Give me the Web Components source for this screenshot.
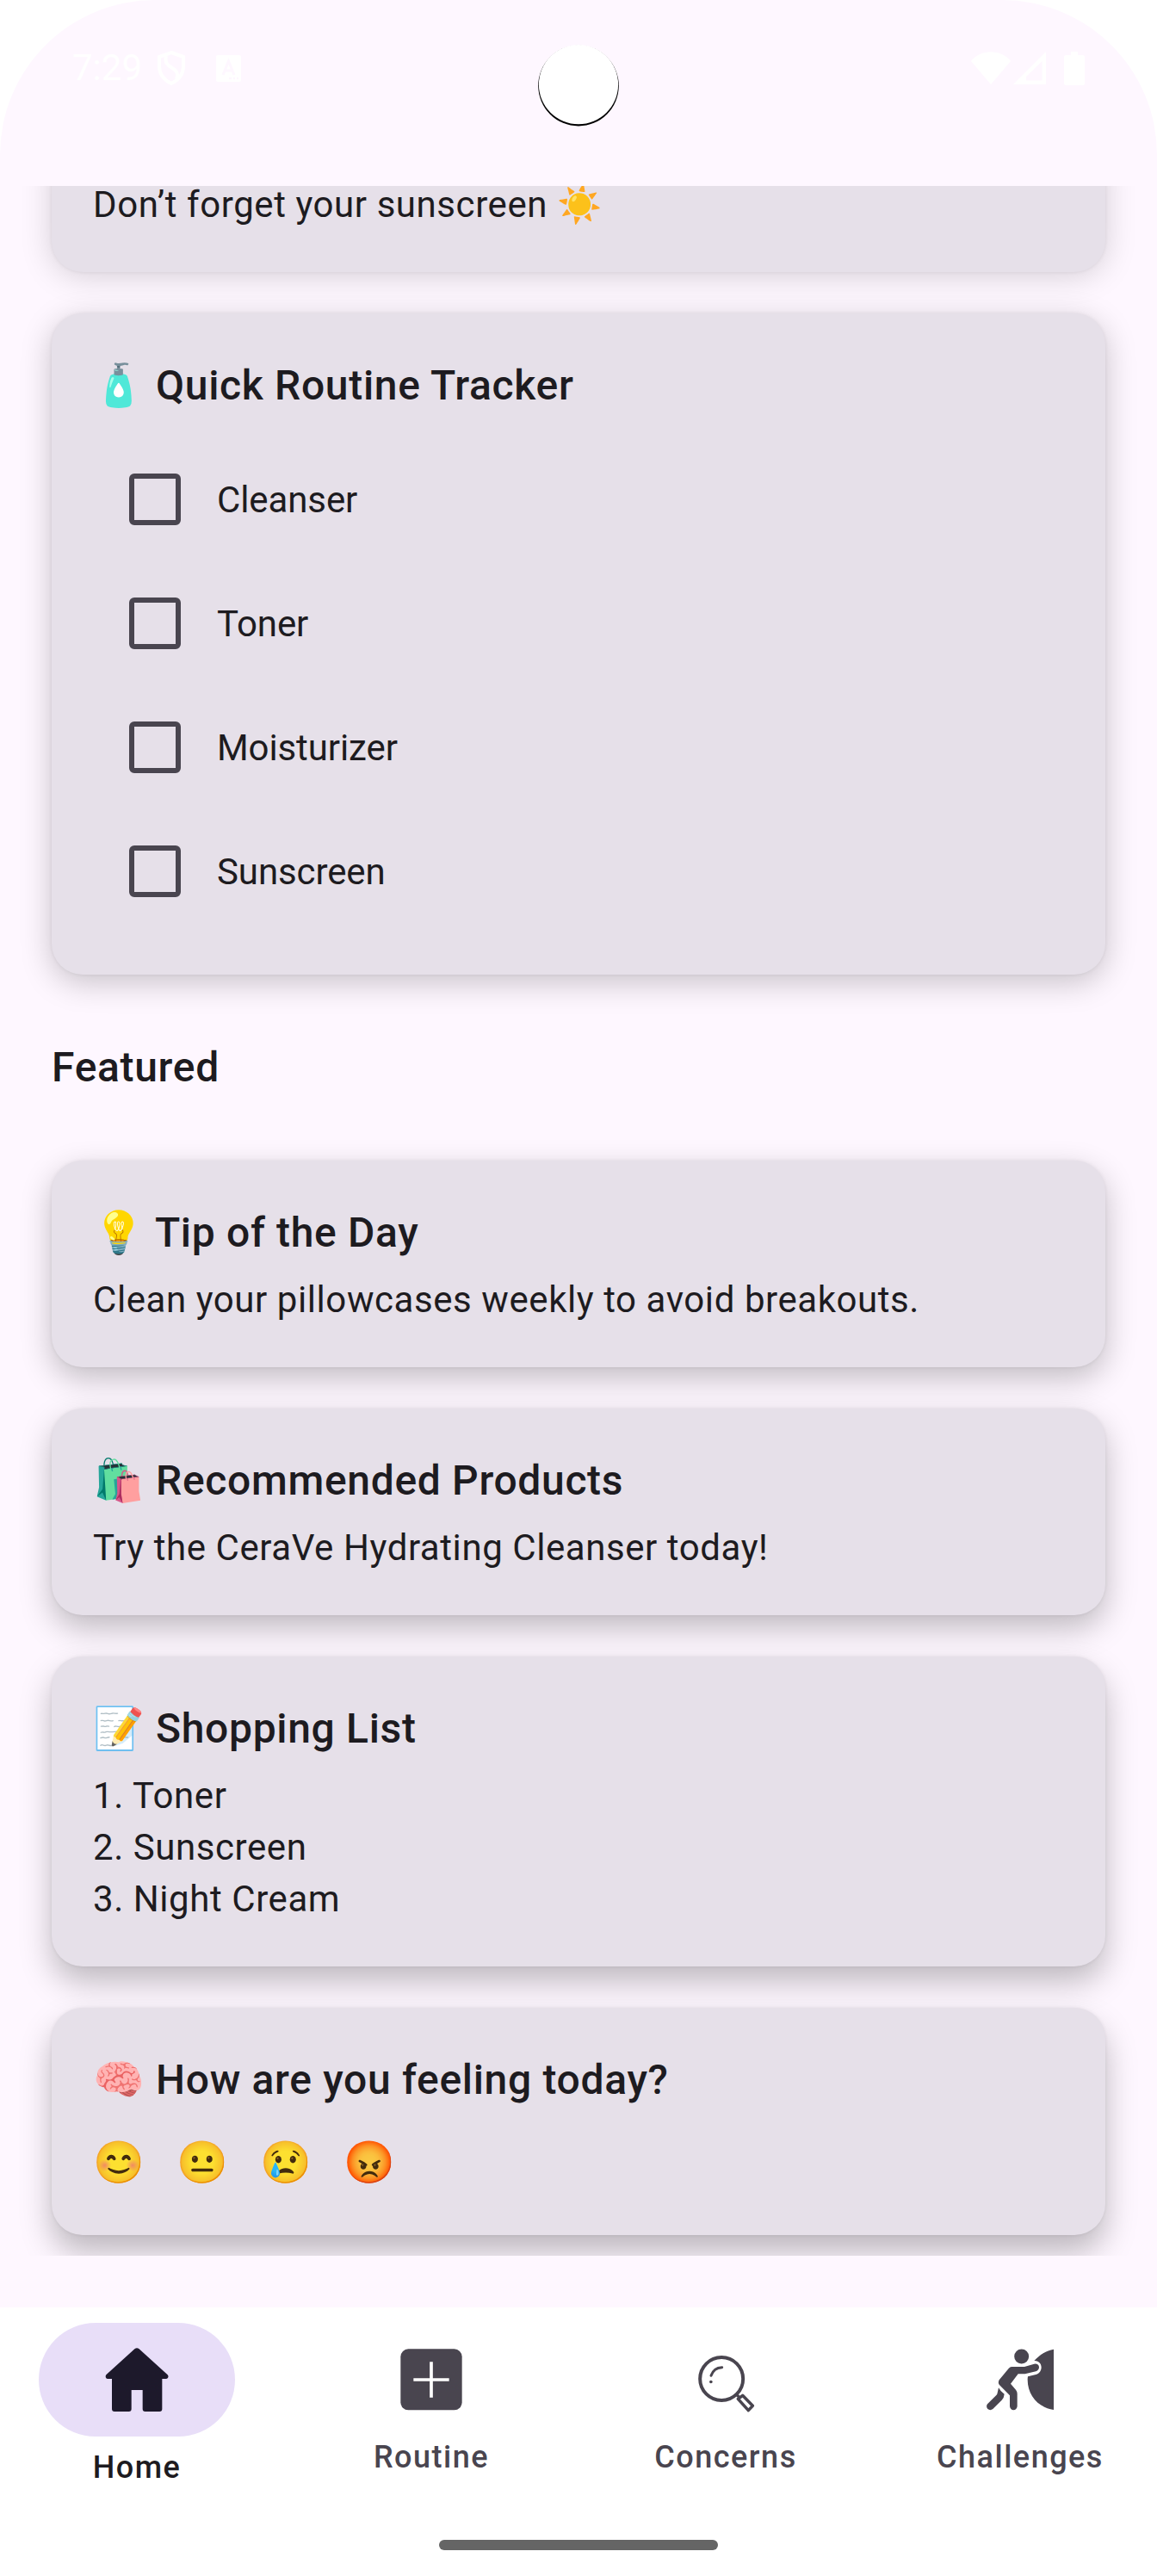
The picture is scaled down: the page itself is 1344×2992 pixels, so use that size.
<!DOCTYPE html>
<html lang="en">
<head>
<meta charset="utf-8">
<title>Skincare Home</title>
<style>
  html, body { margin: 0; padding: 0; background: #fff; }
  body { width: 1344px; height: 2992px; overflow: hidden; font-family: Roboto, "Noto Color Emoji", sans-serif; color: #1d1b20; }
</style>
</head>
<body>
<skin-app></skin-app>
<script>
const define = (name, html) => {
  const t = document.createElement('template');
  t.innerHTML = html;
  customElements.define(name, class extends HTMLElement {
    constructor() {
      super();
      this.attachShadow({ mode: 'open' }).appendChild(t.content.cloneNode(true));
    }
  });
};

define('status-bar', `
<style>
  :host { display: flex; height: 216px; box-sizing: border-box; padding: 54px 84px 0 84px; position: relative; color: #fff; justify-content: space-between; align-items: flex-start; }
  .side { display: flex; align-items: center; height: 50px; }
  .time { font-size: 42px; line-height: 50px; width: 98px; }
  svg { display: block; }
  .cam { position: absolute; left: 625px; top: 52px; }
</style>
<div class="side">
  <span class="time">7:29</span>
  <svg width="34" height="42" viewBox="0 0 34 42" fill="none" stroke="#fff" stroke-width="4"><path d="M17 3 31 8V19C31 28 25 35 17 39 9 35 3 28 3 19V8Z"/><path d="M11 7C9 15 13 18 18 21 25 25 25 29 23 34"/></svg>
  <svg width="29" height="31" viewBox="0 0 29 31" style="margin-left:35px"><rect width="29" height="31" rx="2" fill="#fff"/><path d="M8 23 14.500 7 21 23M10.500 18H18.500" fill="none" stroke="#fef7ff" stroke-width="3"/><path d="M15 27h3m2 0h2m2 0h2" stroke="#fef7ff" stroke-width="2.500"/></svg>
</div>
<div class="side">
  <svg width="46" height="38" viewBox="0 0 46 38"><path d="M0 11C11-3.500 35-3.500 46 11L23 38Z" fill="#fff"/></svg>
  <svg width="38" height="38" viewBox="0 0 38 38" style="margin-left:3px"><path fill-rule="evenodd" d="M38 0V38H0ZM33.500 11 15 29V33.500H33.500Z" fill="#fff"/></svg>
  <svg width="24" height="39" viewBox="0 0 24 39" style="margin-left:21px"><path d="M8 0h8v4h6q2 0 2 2v31q0 2-2 2H2q-2 0-2-2V6q0-2 2-2h6z" fill="#fff"/></svg>
</div>
<svg class="cam" width="94" height="96" viewBox="0 0 94 96"><circle cx="47" cy="47.600" r="46.800" fill="#000"/><circle cx="47" cy="46.200" r="46.100" fill="#fff"/></svg>
`);

define('app-card', `
<style>
  :host { display: flex; flex-direction: column; box-sizing: border-box; padding: 48px; border-radius: 36px; background: #e6e0e9; font-size: 42px; line-height: 60px; letter-spacing: .57px;
    box-shadow: 0 0 4px rgba(0,0,0,.07), 0 var(--drop, 8px) 36px rgba(0,0,0,var(--dark, .2)); }
  ::slotted([slot=title]) { display: block; height: 72px; font-size: 48px; line-height: 72px; font-weight: 500; letter-spacing: .67px; white-space: pre; margin: 0 0 var(--gap, 12px); }
</style>
<slot name="title"></slot><slot></slot>
`);

define('check-row', `
<style>
  :host { display: flex; align-items: center; height: 144px; letter-spacing: -.1px; }
  i { box-sizing: border-box; width: 60px; height: 60px; margin: 0 42px; border: 6px solid #49454f; border-radius: 6px; }
  span { padding-top: 2px; }
</style>
<i></i><span><slot></slot></span>
`);

define('mood-row', `
<style>
  :host { display: flex; height: 72px; font-size: 48px; line-height: 72px; letter-spacing: 0; }
  ::slotted(span) { display: block; width: 97px; }
</style>
<slot></slot>
`);

define('nav-item', `
<style>
  :host { display: flex; flex-direction: column; align-items: center; width: 318px; padding-top: 18px; color: #49454f; }
  .ind { display: flex; align-items: center; justify-content: center; width: 228px; height: 132px; border-radius: 66px; }
  .label { font-size: 36px; line-height: 48px; font-weight: 500; letter-spacing: 1.5px; }
  :host([selected]) .ind { background: #e8def8; }
  :host([selected]) .label { margin-top: 12px; color: #1d1b20; }
  ::slotted(svg) { display: block; width: 72px; height: 72px; overflow: visible; }
</style>
<div class="ind"><slot name="icon"></slot></div>
<div class="label"><slot></slot></div>
`);

define('bottom-nav', `
<style>
  :host { display: flex; flex-direction: column; align-items: center; height: 312px; background: #fff; }
  .items { display: flex; gap: 24px; height: 240px; }
  .handle { width: 324px; height: 12px; border-radius: 6px; background: #656565; margin-top: 30px; }
</style>
<div class="items"><slot></slot></div>
<div class="handle"></div>
`);

define('skin-app', `
<style>
  :host { display: flex; flex-direction: column; width: 1344px; height: 2992px; overflow: hidden; background: #fef7ff; border-radius: 180px 180px 0 0; }
  main { box-sizing: border-box; display: flex; flex-direction: column; justify-content: flex-end; gap: 48px; height: 2404px; padding: 0 60px 24px; overflow: hidden; margin-bottom: 60px; }
  h2 { margin: 24px 0; font-size: 48px; line-height: 72px; font-weight: 500; letter-spacing: .68px; }
  p { margin: 0; white-space: pre; }
  app-card { flex: none; }
</style>
<status-bar></status-bar>
<main>
  <app-card style="--drop:4px;--dark:.17"><p>Don’t forget your sunscreen ☀️</p></app-card>
  <app-card style="--gap:24px;--drop:9px;--dark:.22"><span slot="title">🧴 Quick Routine Tracker</span>
    <check-row>Cleanser</check-row>
    <check-row>Toner</check-row>
    <check-row>Moisturizer</check-row>
    <check-row>Sunscreen</check-row>
  </app-card>
  <h2>Featured</h2>
  <app-card style="--drop:13px;--dark:.24"><span slot="title">💡 Tip of the Day</span><p>Clean your pillowcases weekly to avoid breakouts.</p></app-card>
  <app-card style="--drop:15px;--dark:.25"><span slot="title">🛍️ Recommended Products</span><p>Try the CeraVe Hydrating Cleanser today!</p></app-card>
  <app-card style="--drop:18px;--dark:.25"><span slot="title">📝 Shopping List</span><p>1. Toner</p><p>2. Sunscreen</p><p>3. Night Cream</p></app-card>
  <app-card style="--gap:24px;--drop:20px;--dark:.26"><span slot="title">🧠 How are you feeling today?</span>
    <mood-row><span>😊</span><span>😐</span><span>😢</span><span>😡</span></mood-row>
  </app-card>
</main>
<bottom-nav>
  <nav-item selected><svg slot="icon" viewBox="369 204 216 216"><path d="M470 204q7-5 14 0L584 295q5 6 0 12-2 2-5 2H565V414q0 9-9 9H506q-9 0-9-9V348H458V414q0 9-9 9H399q-9 0-9-9V309H375q-3 0-5-2-4-6 0-12Z" fill="#1d192b"/></svg>Home</nav-item>
  <nav-item><svg slot="icon" viewBox="195 204 216 216"><rect x="196" y="205" width="214" height="213" rx="27" fill="#49454f"/><path d="M303 250V374M241 312H365" stroke="#fff" stroke-width="11"/></svg>Routine</nav-item>
  <nav-item><svg slot="icon" viewBox="261 204 216 216" fill="none" stroke="#49454f"><circle cx="354.500" cy="309" r="75" stroke-width="12"/><path d="M318 298Q327 270 356 269" stroke-width="9" stroke-linecap="round"/><circle cx="317.500" cy="319.500" r="5.500" fill="#49454f" stroke="none"/><path d="M406 363 420 377" stroke-width="10"/><path d="M412 379 428 367 463 403 448 419Z" stroke-width="10.500" stroke-linejoin="round"/></svg>Concerns</nav-item>
  <nav-item><svg slot="icon" viewBox="315 504 216 216"><path d="M540 506V717C486 709 449 666 449 612Q449 606 450 601L478 594C506 586 502 544 472 546 492 524 514 511 540 506Z" fill="#49454f"/><circle cx="428" cy="531" r="25.500" fill="#49454f"/><path d="M348 640Q355 654 368 662 367 675 359 683L328 714Q319 721 310 714 303 706 309 697L340 666Q343 664 344 658Z" fill="#49454f"/><path d="M393 567H438L472 557Q487 555 489 568 489 579 478 583L440 592H416L390 626 408 647Q413 653 413 661V705Q411 717 400 718 389 717 387 705V667L350 629Q345 622 350 613L383 573Q388 567 393 567Z" fill="#49454f"/></svg>Challenges</nav-item>
</bottom-nav>
`);
</script>
</body>
</html>
